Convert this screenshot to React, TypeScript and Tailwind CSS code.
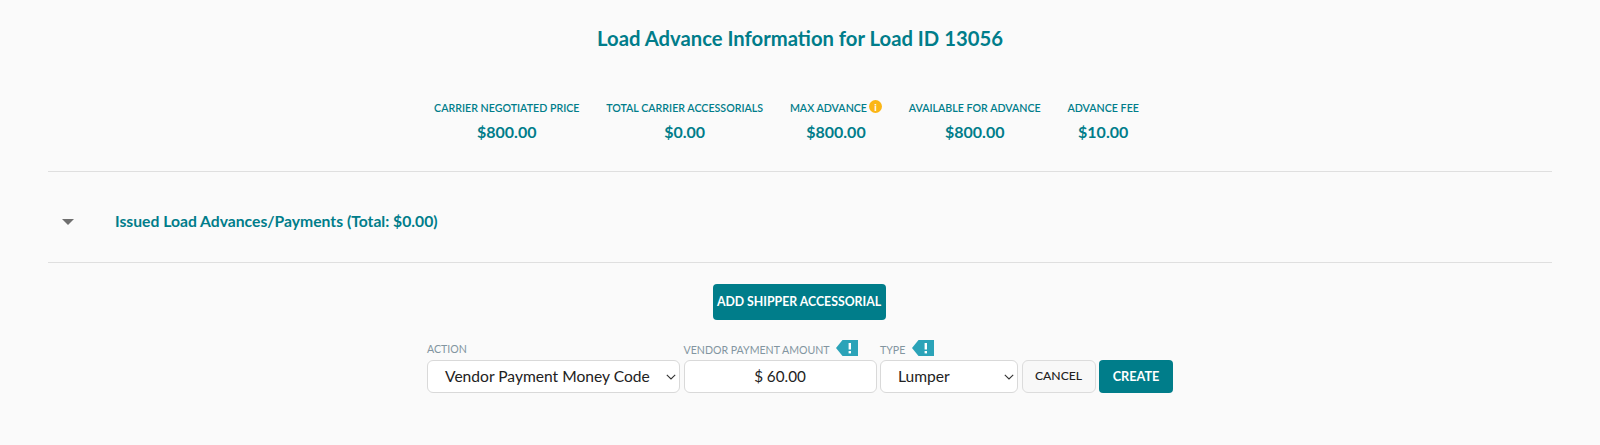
const stats = [
  { label: "CARRIER NEGOTIATED PRICE", value: "$800.00" },
  { label: "TOTAL CARRIER ACCESSORIALS", value: "$0.00" },
  { label: "MAX ADVANCE", value: "$800.00", info: true },
  { label: "AVAILABLE FOR ADVANCE", value: "$800.00" },
  { label: "ADVANCE FEE", value: "$10.00" },
];

function FlagIcon() {
  return (
    <svg width="22" height="16" viewBox="0 0 22 16" className="shrink-0">
      <path d="M0 8 6.5 0H22V16H6.5Z" fill="#2ba3b8" />
      <rect x="12.6" y="3" width="2.4" height="6.5" fill="#fff" />
      <rect x="12.6" y="11" width="2.4" height="2.4" fill="#fff" />
    </svg>
  );
}

function Chevron() {
  return (
    <svg width="10" height="6" viewBox="0 0 10 6" className="shrink-0">
      <path d="M.8.8 5 5 9.2.8" fill="none" stroke="#333" strokeWidth="1.1" />
    </svg>
  );
}

function SelectBox({ text }: { text: string }) {
  return (
    <div className="flex h-[33px] w-full items-center justify-between rounded-md border border-[#d9d9d9] bg-white pl-[17px] pr-[3px] text-[15.6px] text-[#222]">
      <span className="whitespace-nowrap">{text}</span>
      <Chevron />
    </div>
  );
}

export default function App() {
  return (
    <div className="h-[445px] overflow-hidden bg-[#fafafa] px-[48px] pt-[26px] font-['Lato','Open_Sans',sans-serif]">
      <h1 className="text-center text-[20.25px] font-bold leading-[24px] text-[#007d8a]">
        Load Advance Information for Load ID 13056
      </h1>

      <div className="mr-[27px] mt-[50px] flex justify-center gap-[26.75px] text-[#007d8a]">
        {stats.map((s) => (
          <div key={s.label} className="flex flex-col items-center">
            <div className="flex items-center gap-[2px] text-[10.65px] font-semibold leading-[16px] whitespace-nowrap">
              {s.label}
              {s.info && (
                <span className="-mt-[3px] flex h-[13px] w-[13px] items-center justify-center rounded-full bg-[#fbb616] text-[10px] font-bold leading-none text-white">
                  i
                </span>
              )}
            </div>
            <div className="mt-[5px] text-[16px] font-bold leading-[22px]">{s.value}</div>
          </div>
        ))}
      </div>

      <div className="mt-[28px] flex h-[92px] items-center border-y border-[#dfdfdf] pt-[9px]">
        <svg width="12" height="6" viewBox="0 0 12 6" className="ml-[14px] shrink-0">
          <path d="M0 0h12L6 6Z" fill="#6f6f6f" />
        </svg>
        <div className="ml-[41px] text-[15.7px] font-bold text-[#007d8a]">
          Issued Load Advances/Payments (Total: $0.00)
        </div>
      </div>

      <div className="mt-[21px] flex justify-center">
        <button className="mr-[2px] h-[36px] w-[173px] rounded bg-[#007d8a] text-[12.3px] font-bold whitespace-nowrap text-white">
          ADD SHIPPER ACCESSORIAL
        </button>
      </div>

      <div className="mt-[20px] flex items-end justify-center gap-[3.5px]">
        <div className="w-[253px]">
          <div className="flex h-[20px] items-center text-[10.6px] text-[#8295a0]">ACTION</div>
          <SelectBox text="Vendor Payment Money Code" />
        </div>
        <div className="w-[193px]">
          <div className="flex h-[20px] items-start gap-[6px] text-[10.6px] leading-[20px] whitespace-nowrap text-[#8295a0]">
            VENDOR PAYMENT AMOUNT
            <FlagIcon />
          </div>
          <div className="flex h-[33px] items-center justify-center rounded-md border border-[#d9d9d9] bg-white text-[15.25px] text-[#222]">
            $ 60.00
          </div>
        </div>
        <div className="w-[138px]">
          <div className="flex h-[20px] items-start gap-[7px] text-[10.6px] leading-[20px] text-[#8295a0]">
            TYPE
            <FlagIcon />
          </div>
          <SelectBox text="Lumper" />
        </div>
        <button className="h-[33px] w-[74px] rounded-md border border-[#dcdcdc] bg-[#f8f8f8] text-[12.2px] font-medium text-[#222]">
          CANCEL
        </button>
        <button className="h-[33px] w-[74px] rounded bg-[#007d8a] text-[12.7px] font-bold text-white">
          CREATE
        </button>
      </div>
    </div>
  );
}
